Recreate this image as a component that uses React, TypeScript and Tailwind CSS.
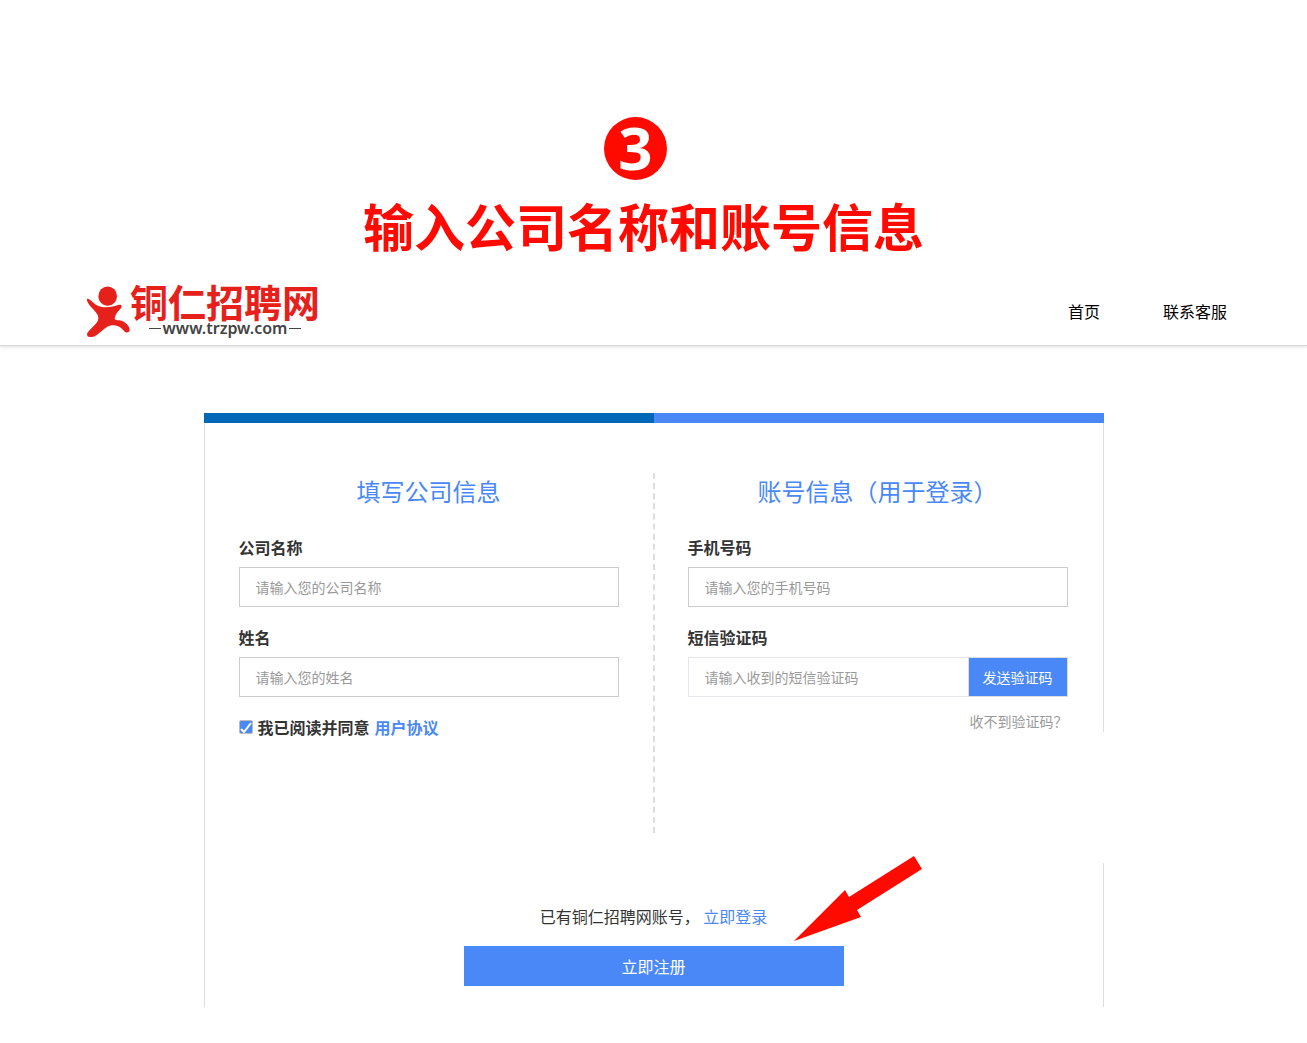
import React, { useState } from 'react';

interface FieldProps {
  id: string;
  label: string;
  placeholder: string;
  type?: string;
}

// 表单输入项
const Field: React.FC<FieldProps> = ({ id, label, placeholder, type = 'text' }) => (
  <div className="mb-4">
    <label htmlFor={id} className="block mb-1.5 text-base leading-7 font-bold text-[#333]">
      {label}
    </label>
    <input
      id={id}
      type={type}
      placeholder={placeholder}
      className="block w-full h-10 px-4 border border-[#ccc] text-sm text-[#333] placeholder:text-[#999] outline-none"
    />
  </div>
);

// 网站 logo
const Logo: React.FC = () => (
  <a href="#" className="flex items-center pl-[6px]">
    <svg className="w-11 h-[51px]" viewBox="50 46 132 152" fill="#e6211b" aria-hidden="true">
      <ellipse cx="115" cy="76" rx="28" ry="29" />
      <path d="M53 84 C60 82 68 94 80 102 C100 114 128 110 148 102 C157 100 160 106 154 113 C144 123 138 132 136 142 C136 146 140 148 150 148 C168 151 182 166 181 179 C178 187 169 187 162 178 C153 166 138 162 124 164 C110 166 98 182 80 194 C69 200 58 199 55 196 C51 190 54 186 59 180 C71 165 87 156 87 142 C87 131 78 123 70 114 C61 104 51 92 53 84 Z" />
    </svg>
    <span className="flex flex-col items-center">
      <span className="text-[38px] leading-[34px] font-bold text-[#e6211b]">铜仁招聘网</span>
      <span className="flex items-center gap-0.5 text-base leading-5 font-semibold font-['Noto_Sans'] text-[#444]">
        <i className="w-3 h-px bg-[#444]"></i>
        www.trzpw.com
        <i className="w-3 h-px bg-[#444]"></i>
      </span>
    </span>
  </a>
);

const App: React.FC = () => {
  const [agreed, setAgreed] = useState(true);

  return (
    <div className="min-h-screen bg-white pb-9 font-['Noto_Sans_CJK_SC',sans-serif] text-base text-[#333]">
      {/* 步骤标题 */}
      <section className="pt-[117px] pb-[23px] text-center">
        <div className="flex justify-center pr-9">
          <span className="flex items-center justify-center w-[63px] h-[63px] pb-1 rounded-full bg-[#ff0a00] text-[60px] leading-none font-bold font-['Noto_Sans'] text-white">
            3
          </span>
        </div>
        <h1 className="mt-4 pr-5 text-[51px] leading-[58px] font-bold text-[#ff0a00]">输入公司名称和账号信息</h1>
      </section>

      {/* 顶部导航 */}
      <header className="flex items-center justify-between h-[69px] px-20 border-b border-[#d8d8d8] shadow-[0_2px_2px_rgba(0,0,0,0.08)]">
        <Logo />
        <nav className="flex gap-[63px] text-black">
          <a href="#">首页</a>
          <a href="#">联系客服</a>
        </nav>
      </header>

      <main className="relative max-w-[900px] mx-auto mt-[67px]">
        <div className="grid grid-cols-2 h-2.5">
          <div className="bg-[#0068b7]"></div>
          <div className="bg-[#4a88f8]"></div>
        </div>

        <form className="border-x border-[#ddd] pt-[50px] pb-[21px]" onSubmit={(e) => e.preventDefault()}>
          <div className="flex min-h-[360px]">
            {/* 公司信息 */}
            <div className="flex-1 px-[34px]">
              <h2 className="mb-6 text-2xl leading-9 text-center text-[#4a88f8]">填写公司信息</h2>
              <Field id="company" label="公司名称" placeholder="请输入您的公司名称" />
              <Field id="name" label="姓名" placeholder="请输入您的姓名" />
              <div className="flex items-center gap-[5px] leading-7 font-bold">
                <span className="relative w-[14px] h-[14px]">
                  <input
                    id="agree"
                    type="checkbox"
                    checked={agreed}
                    onChange={(e) => setAgreed(e.target.checked)}
                    className="peer block w-[14px] h-[14px] appearance-none rounded-xs border border-[#bbb] checked:bg-[#4a88f8]"
                  />
                  <svg className="absolute inset-0 hidden peer-checked:block pointer-events-none" viewBox="0 0 14 14" fill="none" stroke="#fff" strokeWidth="2">
                    <path d="M2 9 L5 12 L12 3" />
                  </svg>
                </span>
                <label htmlFor="agree">我已阅读并同意</label>
                <a href="#" className="text-[#4a88f8]">用户协议</a>
              </div>
            </div>

            <div className="border-l-2 border-dashed border-[#ddd]"></div>

            {/* 账号信息 */}
            <div className="flex-1 pl-[33px] pr-[35px]">
              <h2 className="mb-6 text-2xl leading-9 text-center text-[#4a88f8]">账号信息（用于登录）</h2>
              <Field id="phone" label="手机号码" placeholder="请输入您的手机号码" type="tel" />
              <label htmlFor="code" className="block mb-1.5 leading-7 font-bold">
                短信验证码
              </label>
              <div className="flex h-10">
                <input
                  id="code"
                  type="text"
                  placeholder="请输入收到的短信验证码"
                  className="flex-1 min-w-0 px-4 border border-r-0 border-[#e6e6f0] text-sm placeholder:text-[#999] outline-none"
                />
                <button type="button" className="w-[100px] border border-[#ddd] bg-[#4a88f8] text-sm text-white">
                  发送验证码
                </button>
              </div>
              <div className="mt-2.5 text-right text-sm leading-7">
                <a href="#" className="text-[#999]">收不到验证码？</a>
              </div>
            </div>
          </div>

          {/* 提交 */}
          <div className="flex flex-col items-center gap-4 mt-[69px]">
            <p className="leading-7">
              已有铜仁招聘网账号， <a href="#" className="text-[#4a88f8]">立即登录</a>
            </p>
            <button type="submit" className="w-full max-w-[380px] h-10 bg-[#4a88f8] text-white">
              立即注册
            </button>
          </div>
        </form>

        {/* 右侧边框的空白 */}
        <div className="absolute right-0 top-[319px] w-0.5 h-[131px] bg-white"></div>

        {/* 指向注册按钮的箭头 */}
        <svg className="absolute left-[590px] top-[443px] w-32 h-[85px] pointer-events-none" viewBox="0 0 128 85" fill="#ff0a00" aria-hidden="true">
          <path d="M0 85 L51 34 L55 41 L120 0 L128 13 L63 54 L67 61 Z" />
        </svg>
      </main>
    </div>
  );
};

export default App;
